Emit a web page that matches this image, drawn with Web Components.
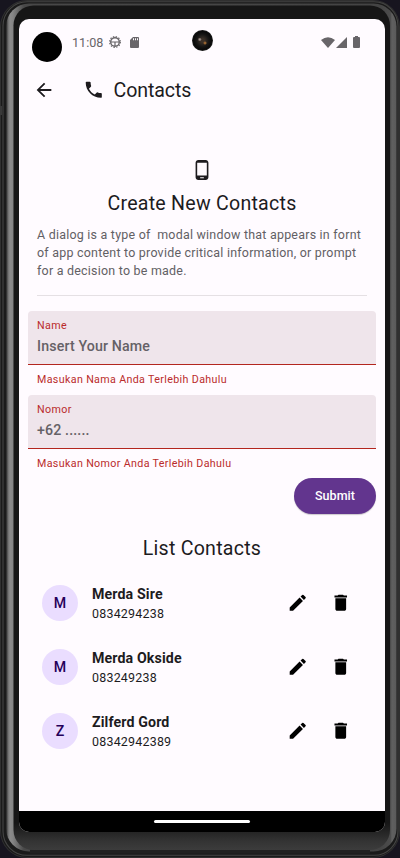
<!DOCTYPE html>
<html lang="en"><head><meta charset="utf-8"><title>Contacts</title>
<style>html,body{margin:0;background:#171421}body{width:400px;height:858px;overflow:hidden;font-family:Roboto,sans-serif;color:#1d1b1e}</style></head>
<body>
<phone-frame>
 <status-bar time="11:08"></status-bar>
 <app-bar>Contacts</app-bar>
 <dialog-intro><span slot="title">Create New Contacts</span><div>A dialog is a type of&nbsp; modal window that appears in fornt</div><div>of app content to provide critical information, or prompt</div><div>for a decision to be made.</div></dialog-intro>
 <text-field label="Name" error="Masukan Nama Anda Terlebih Dahulu">Insert Your Name</text-field>
 <text-field label="Nomor" error="Masukan Nomor Anda Terlebih Dahulu">+62 ......</text-field>
 <submit-button>Submit</submit-button>
 <list-heading>List Contacts</list-heading>
 <contact-row initial="M" number="0834294238">Merda Sire</contact-row>
 <contact-row initial="M" number="083249238">Merda Okside</contact-row>
 <contact-row initial="Z" number="08342942389">Zilferd Gord</contact-row>
</phone-frame>
<script>
const define=(name,render)=>customElements.define(name,class extends HTMLElement{
 constructor(){super();this.attachShadow({mode:'open'});}
 connectedCallback(){this.shadowRoot.innerHTML='<style>*{box-sizing:border-box}:host{display:block;box-sizing:border-box}svg{display:block;fill:currentColor;flex:none}</style>'+render(this);}
});
const icons={
 back:'M20 11H7.83l5.59-5.59L12 4l-8 8 8 8 1.41-1.41L7.83 13H20z',
 phone:'M6.62 10.79c1.44 2.83 3.76 5.14 6.59 6.59l2.2-2.2c.27-.27.67-.36 1.02-.24 1.12.37 2.33.57 3.57.57.55 0 1 .45 1 1V20c0 .55-.45 1-1 1C10.61 21 3 13.39 3 4c0-.55.45-1 1-1h3.5c.55 0 1 .45 1 1 0 1.25.2 2.45.57 3.57.11.35.03.74-.25 1.02z',
 mobile:'M16 1H8C6.34 1 5 2.34 5 4v16c0 1.66 1.34 3 3 3h8c1.66 0 3-1.34 3-3V4c0-1.66-1.34-3-3-3zm-2 20h-4v-1h4zm3.25-3H6.75V4h10.5z',
 edit:'M3 17.25V21h3.75L17.81 9.94l-3.75-3.75zM20.71 7.04a1 1 0 0 0 0-1.41l-2.34-2.34a1 1 0 0 0-1.41 0l-1.83 1.83 3.75 3.75z',
 trash:'M6 19c0 1.1.9 2 2 2h8c1.1 0 2-.9 2-2V7H6zM19 4h-3.5l-1-1h-5l-1 1H5v2h14z'
};
const icon=(n,s)=>`<svg class="${n}" width="${s}" height="${s}" viewBox="0 0 24 24"><path d="${icons[n]}"/></svg>`;

define('phone-frame',()=>`<style>
:host{width:400px;height:858px;position:relative}
.shell{position:absolute;inset:0}
.screen{position:absolute;left:19px;top:19px;width:366px;height:813px;border-radius:10px;background:#fffbff;overflow:hidden;display:flex;flex-direction:column}
.content{flex:1}
.nav{height:21px;background:#000;display:flex;justify-content:center;align-items:center}
.nav i{width:96px;height:3px;border-radius:2px;background:#fff}
</style>
<svg class="shell" width="400" height="858" viewBox="0 0 400 858">
<defs>
<linearGradient id="h" gradientUnits="userSpaceOnUse" x1="0" x2="400" y1="0" y2="0">
<stop offset="0" stop-color="#333"/><stop offset=".0165" stop-color="#333"/><stop offset=".02" stop-color="#6d6d6d"/><stop offset=".025" stop-color="#8b8b8b"/><stop offset=".032" stop-color="#858585"/><stop offset=".06" stop-color="#484848"/>
<stop offset=".95" stop-color="#444"/><stop offset=".976" stop-color="#4c4c4c"/><stop offset=".98" stop-color="#606060"/><stop offset="1" stop-color="#555"/></linearGradient>
<linearGradient id="b" x1="0" x2="0" y1="0" y2="1"><stop offset="0" stop-color="#161616"/><stop offset=".968" stop-color="#161616"/><stop offset=".99" stop-color="#343434"/><stop offset="1" stop-color="#3c3c3c"/></linearGradient>
</defs>
<rect width="400" height="858" fill="#17151f"/>
<rect width="400" height="858" rx="27" fill="#303030"/>
<rect x="1" y="1" width="398" height="856" rx="26" fill="#1a1a1a"/>
<rect x="3" y="1.8" width="395" height="853.5" rx="24" fill="none" stroke="#444" stroke-width="1.1"/>
<rect x="6" y="3.5" width="390.5" height="848" rx="23" fill="url(#h)"/>
<path d="M30 851.5H370" stroke="#202020" stroke-width="4"/>
<rect x="13.5" y="5.5" width="376.5" height="844.5" rx="20" fill="url(#b)"/>
<rect x="0" y="106" width="2" height="9" fill="#393939"/>
</svg>
<div class="screen"><div class="content"><slot></slot></div><div class="nav"><i></i></div></div>`);

define('status-bar',e=>`<style>
:host{height:47px;position:relative;color:#686569}
.row{display:flex;align-items:center;height:46px;padding:0 25px 0 53px}
span{font-size:12.6px;letter-spacing:0;line-height:14px;width:37px;padding-top:1px;white-space:nowrap}
.gap{flex:1}.cut,.cam{position:absolute;border-radius:50%}
.cut{left:13px;top:13px;width:30px;height:30px;background:#000}
.cam{left:173px;top:11px;width:21px;height:21px;background:radial-gradient(circle at 62% 62%,#a66c32 0 .5px,transparent 2px),radial-gradient(circle at 37% 45%,#a2918b 0 .5px,transparent 2px),radial-gradient(circle,#3b3027 0 2px,#171615 6px,#090909 9px,#262626 11px)}
</style><div class="row"><span>${e.getAttribute('time')}</span>
<svg width="12" height="12" viewBox="0 0 12 12"><circle cx="6" cy="6" r="4.3" fill="none" stroke="currentColor" stroke-width="1.4"/><circle cx="6" cy="6" r="5.4" fill="none" stroke="currentColor" stroke-width="1.1" stroke-dasharray="1.4 1.43"/><path d="M2 5.4h8v1.1H6.6V10H5.4V6.5H2z"/></svg>
<svg width="9" height="11" viewBox="0 0 9 11" style="margin-left:9px"><path fill-rule="evenodd" d="M3 0h5q1 0 1 1v9q0 1-1 1H1q-1 0-1-1V3zM3 1.3v2h1v-2zm2 0v2h1v-2zm2 0v2h1v-2z"/></svg>
<div class="gap"></div>
<svg width="14" height="11" viewBox="0 0 14 11"><path d="M0 3Q7-2.5 14 3L7 11z"/></svg>
<svg width="11" height="11" viewBox="0 0 11 11" style="margin-left:1px"><path d="M11 0V11H0z"/></svg>
<svg width="7" height="12" viewBox="0 0 7 12" style="margin-left:6px"><path d="M2 0h3v1h1q1 0 1 1v9q0 1-1 1H1q-1 0-1-1V2q0-1 1-1h1z"/></svg>
</div><div class="cut"></div><div class="cam"></div>`);

define('app-bar',()=>`<style>
:host{height:48px;display:flex;align-items:center;padding-left:14px;font-size:19.6px;letter-spacing:-.1px}
.phone{margin:0 9px 0 28px}
</style>${icon('back',22)}${icon('phone',21.5)}<slot></slot>`);

define('dialog-intro',()=>`<style>
:host{margin:0 18px;padding-top:45px;height:182px;border-bottom:1px solid #e5e0e4;color:#626064;font-size:12.45px;line-height:18px;letter-spacing:.235px;white-space:nowrap}
svg{margin:0 auto;color:#1d1b1e}
h1{margin:11px 0 10px;font-size:19.6px;font-weight:400;line-height:24px;letter-spacing:.24px;text-align:center;color:#1d1b1e}
</style>${icon('mobile',22)}<h1><slot name="title"></slot></h1><slot></slot>`);

define('text-field',e=>`<style>
:host{margin:15px 9px 0;white-space:nowrap}
:host(:nth-of-type(n+2)){margin-top:8px}
.box{height:54px;background:#efe5eb;border-bottom:1px solid #b3261e;border-radius:4px 4px 0 0;padding:8px 9px 0}
label{display:block;color:#ba2b2b;font-size:10.7px;line-height:14px;letter-spacing:.36px}
.value{margin-top:4px;color:#656166;font-size:14.2px;font-weight:500;line-height:18px;letter-spacing:.14px}
.error{padding-left:9px;margin-top:8px;color:#ba2b2b;font-size:10.7px;line-height:14px;letter-spacing:.35px}
</style><div class="box"><label>${e.getAttribute('label')}</label><div class="value"><slot></slot></div></div><div class="error">${e.getAttribute('error')}</div>`);

define('submit-button',()=>`<style>
:host{display:flex;justify-content:flex-end;padding:7px 9px 0 0}
button{width:82px;height:36px;padding:0;border:0;border-radius:18px;background:#62358e;color:#fff;font:500 12.5px/36px Roboto,sans-serif;letter-spacing:.06px;box-shadow:0 1px 1px #0003}
</style><button><slot></slot></button>`);

define('list-heading',()=>`<style>:host{height:57px;padding-top:22px;text-align:center;font-size:19.6px;line-height:26px;letter-spacing:.24px}</style><slot></slot>`);

define('contact-row',e=>`<style>
:host{height:64px;display:flex;align-items:center;padding:0 34px 0 23px}
.avatar{width:36px;height:36px;border-radius:50%;background:#eaddff;color:#25005a;display:flex;align-items:center;justify-content:center;font-size:14.2px;font-weight:500;margin-right:14px}
.info{flex:1;white-space:nowrap;padding-top:1px}
.name{font-size:14.2px;font-weight:700;line-height:20px;letter-spacing:.12px}
.num{font-size:12.45px;line-height:20px;letter-spacing:.22px}
svg{color:#000}.edit{margin-right:21px}
</style><div class="avatar">${e.getAttribute('initial')}</div><div class="info"><div class="name"><slot></slot></div><div class="num">${e.getAttribute('number')}</div></div>${icon('edit',21.5)}${icon('trash',21.5)}`);
</script></body></html>
